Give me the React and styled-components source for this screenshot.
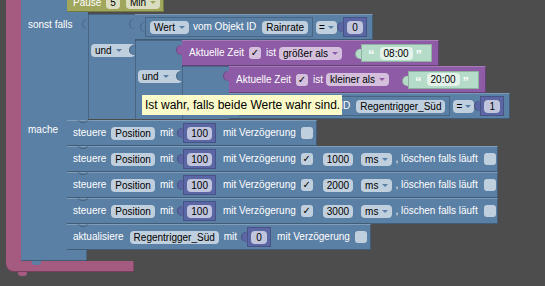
import React from "react";
import styled, { createGlobalStyle, css } from "styled-components";

const C = {
  bg: "#4d4d4d",
  logic: "#5b80a5",
  loop: "#a55b80",
  time: "#8e5ba6",
  math: "#5b67a5",
  text: "#b5dcc8",
  timeout: "#a0a65c",
};

const GlobalStyle = createGlobalStyle`
  html, body {
    margin: 0;
    padding: 0;
    background: ${C.bg};
  }
  body {
    font-family: "Liberation Sans", Arial, sans-serif;
  }
`;

// puzzle tab on the left edge of an output block
const tab = (color, w = 6) => css`
  &::before {
    content: "";
    position: absolute;
    left: -${w}px;
    top: 5px;
    width: ${w}px;
    height: 10px;
    background: ${color};
    border-radius: 5px 0 0 5px;
    box-shadow: inset 1px 0 0 rgba(0, 0, 0, 0.22);
  }
`;

const Workspace = styled.div`
  position: relative;
  width: 545px;
  height: 286px;
  overflow: hidden;
  background: ${C.bg};
  color: #fff;
  font-size: 10px;
  line-height: 12px;
`;

const Placed = styled.div`
  position: absolute;
  left: ${(p) => p.$x}px;
  top: ${(p) => p.$y}px;
`;

const CBlock = styled.div`
  display: flex;
  flex-direction: column;
  align-items: flex-start;
`;

const CBody = styled.div`
  display: flex;
  align-items: stretch;
`;

const Spine = styled.div`
  width: 15px;
  background: ${(p) => p.$c};
`;

const Foot = styled.div`
  position: relative;
  z-index: ${(p) => p.$z ?? 0};
  width: ${(p) => p.$w}px;
  height: 11px;
  background: ${(p) => p.$c};
  border-radius: ${(p) => (p.$round ? "0 0 0 8px" : "0")};
  box-shadow: inset 0 -1px 0 rgba(0, 0, 0, 0.28), inset -1px 0 0 rgba(0, 0, 0, 0.2);

  &::after {
    content: "";
    position: absolute;
    left: ${(p) => p.$tab}px;
    bottom: -4px;
    width: 9px;
    height: 4px;
    background: ${(p) => p.$c};
    border-radius: 0 0 3px 3px;
  }
`;

const IfBlock = styled.div`
  display: flex;
  flex-direction: column;
  align-items: flex-start;
`;

const IfSection = styled.div`
  display: flex;
  align-items: stretch;
`;

const IfCol = styled.div`
  flex-shrink: 0;
  box-sizing: border-box;
  width: ${(p) => p.$w}px;
  padding: ${(p) => p.$pt ?? 0}px 0 0 7px;
  background: ${C.logic};
  white-space: nowrap;
`;

const Slot = styled.div`
  padding: 2px 0 1px;
`;

const Stack = styled.div`
  display: flex;
  flex-direction: column;
  align-items: flex-start;
`;

const Statement = styled.div`
  position: relative;
  display: flex;
  align-items: center;
  flex-shrink: 0;
  box-sizing: border-box;
  height: 26px;
  padding: ${(p) => p.$pt ?? 0}px ${(p) => p.$pr ?? 4}px 0 1px;
  background: ${(p) => p.$c};
  box-shadow: inset 0 1px 0 rgba(255, 255, 255, 0.22),
    inset -1px -1px 0 rgba(0, 0, 0, 0.28);

  &::after {
    content: "";
    position: absolute;
    left: 10px;
    top: 0;
    width: 12px;
    height: 4px;
    background: rgba(0, 0, 0, 0.22);
    clip-path: polygon(0 0, 4px 3px, 8px 3px, 12px 0, 10.5px 0, 7.5px 2px, 4.5px 2px, 1.5px 0);
  }
`;

const VBlock = styled.div`
  position: relative;
  display: flex;
  align-items: center;
  flex-shrink: 0;
  box-sizing: border-box;
  height: ${(p) => p.$h}px;
  margin-left: ${(p) => p.$ml ?? 0}px;
  padding: 0 ${(p) => p.$pr ?? 6}px 0 ${(p) => p.$pl ?? 0}px;
  background: ${(p) => p.$c};
  box-shadow: ${(p) =>
    p.$inner
      ? "inset 0 0 0 1px rgba(0, 0, 0, 0.2)"
      : "inset 0 1px 0 rgba(255, 255, 255, 0.2), inset -1px -1px 0 rgba(0, 0, 0, 0.28)"};
  ${(p) => tab(p.$c, p.$tab ?? 6)}
`;

const AndBox = styled.div`
  position: relative;
  display: flex;
  flex-direction: column;
  align-items: flex-start;
  ${tab(C.logic)}
`;

const AndRow = styled.div`
  display: flex;
  align-items: stretch;
`;

const AndCol = styled.div`
  flex-shrink: 0;
  box-sizing: border-box;
  width: 47px;
  padding: 4px 0 0 3px;
  background: ${C.logic};
  box-shadow: inset 1px 0 0 rgba(0, 0, 0, 0.2)
    ${(p) => (p.$top ? ", inset 0 1px 0 rgba(0, 0, 0, 0.2)" : "")};
`;

const Txt = styled.span`
  flex-shrink: 0;
  margin-left: ${(p) => p.$ml ?? 5}px;
  color: #fff;
  white-space: nowrap;
`;

const Field = styled.span`
  flex-shrink: 0;
  box-sizing: border-box;
  min-width: ${(p) => p.$min ?? 0}px;
  height: 13px;
  margin-left: ${(p) => p.$ml ?? 5}px;
  padding: 0 ${(p) => (p.$tight ? 3 : 4)}px;
  border-radius: 4px;
  background: rgba(255, 255, 255, 0.62);
  color: #000;
  line-height: 13px;
  text-align: center;
  white-space: nowrap;
`;

const Dropdown = styled(Field)`
  display: flex;
  align-items: center;

  &::after {
    content: "";
    margin-left: ${(p) => (p.$tight ? 3 : 4)}px;
    border-left: 3px solid transparent;
    border-right: 3px solid transparent;
    border-top: 3.5px solid ${(p) => p.$arrow};
  }
`;

const Check = styled.span`
  flex-shrink: 0;
  width: 12px;
  height: 12px;
  margin-left: ${(p) => p.$ml ?? 5}px;
  border-radius: 3px;
  background: rgba(255, 255, 255, 0.62);
  color: #000;
  font: bold 10px/12px "DejaVu Sans", sans-serif;
  text-align: center;
`;

const Quote = styled.span`
  margin-left: ${(p) => p.$ml ?? 0}px;
  color: #fff;
  font-size: 13px;
  font-weight: bold;
  line-height: 13px;
  padding-top: 3px;
`;

const Tip = styled.div`
  position: absolute;
  left: 142px;
  top: 95px;
  z-index: 5;
  height: 20px;
  padding: 0 2px 0 3px;
  background: #fbfac9;
  color: #000;
  font-size: 12px;
  line-height: 20px;
  white-space: nowrap;
`;

function NumberBlock({ value, ml }) {
  return (
    <VBlock $c={C.math} $h={20} $ml={ml} $pl={4} $pr={4} $inner>
      <Field $ml={0} $min={16}>
        {value}
      </Field>
    </VBlock>
  );
}

function And({ a, b }) {
  return (
    <AndBox>
      <AndRow>
        <AndCol $top />
        {a}
      </AndRow>
      <AndRow>
        <AndCol>
          <Dropdown $ml={0} $arrow={C.logic}>
            und
          </Dropdown>
        </AndCol>
        {b}
      </AndRow>
    </AndBox>
  );
}

function Compare({ obj, num, h = 26 }) {
  return (
    <VBlock $c={C.logic} $h={h} $pr={6}>
      <VBlock $c={C.logic} $h={20} $ml={10} $pr={5} $tab={5} $inner>
        <Dropdown $arrow={C.logic}>Wert</Dropdown>
        <Txt $ml={4}>vom Objekt ID</Txt>
        <Field $ml={6}>{obj}</Field>
      </VBlock>
      <Dropdown $ml={3} $arrow={C.logic} $tight>
        =
      </Dropdown>
      <NumberBlock value={num} ml={6} />
    </VBlock>
  );
}

function TimeCompare({ op, time, h = 26 }) {
  return (
    <VBlock $c={C.time} $h={h} $pl={2} $pr={7}>
      <Txt>Aktuelle Zeit</Txt>
      <Check>✓</Check>
      <Txt>ist</Txt>
      <Dropdown $ml={3} $arrow={C.time}>
        {op}
      </Dropdown>
      <VBlock $c={C.text} $h={18} $ml={19} $pl={7} $pr={10} $inner>
        <Quote>“</Quote>
        <Field $ml={5}>{time}</Field>
        <Quote $ml={3}>”</Quote>
      </VBlock>
    </VBlock>
  );
}

const delays = ["1000", "2000", "3000"];

export default function App() {
  return (
    <>
      <GlobalStyle />
      <Workspace>
        <Placed $x={6} $y={-14}>
          <CBlock>
            <CBody>
              <Spine $c={C.loop} />
              <IfBlock>
                <IfSection>
                  <IfCol $w={46} />
                  <Stack>
                    <Statement $c={C.timeout} $pr={4} $pt={7}>
                      <Txt>Pause</Txt>
                      <Field>5</Field>
                      <Dropdown $ml={6} $arrow={C.timeout}>
                        Min
                      </Dropdown>
                    </Statement>
                  </Stack>
                </IfSection>

                <IfSection>
                  <IfCol $w={67} $pt={7}>
                    sonst falls
                  </IfCol>
                  <Slot>
                    <And
                      a={<Compare obj="Rainrate" num="0" />}
                      b={
                        <And
                          a={<TimeCompare op="größer als" time="08:00" />}
                          b={
                            <And
                              a={<TimeCompare op="kleiner als" time="20:00" h={27} />}
                              b={<Compare obj="Regentrigger_Süd" num="1" />}
                            />
                          }
                        />
                      }
                    />
                  </Slot>
                </IfSection>

                <IfSection>
                  <IfCol $w={46} $pt={4}>
                    mache
                  </IfCol>
                  <Stack>
                    <Statement $c={C.logic}>
                      <Txt>steuere</Txt>
                      <Field>Position</Field>
                      <Txt>mit</Txt>
                      <NumberBlock value="100" ml={10} />
                      <Txt $ml={7}>mit Verzögerung</Txt>
                      <Check />
                    </Statement>
                    {delays.map((d) => (
                      <Statement key={d} $c={C.logic} $pr={2}>
                        <Txt>steuere</Txt>
                        <Field>Position</Field>
                        <Txt>mit</Txt>
                        <NumberBlock value="100" ml={10} />
                        <Txt $ml={7}>mit Verzögerung</Txt>
                        <Check>✓</Check>
                        <Field $ml={10}>{d}</Field>
                        <Dropdown $ml={8} $arrow={C.logic}>
                          ms
                        </Dropdown>
                        <Txt $ml={3}>, löschen falls läuft</Txt>
                        <Check $ml={6} />
                      </Statement>
                    ))}
                    <Statement $c={C.logic}>
                      <Txt>aktualisiere</Txt>
                      <Field $ml={6}>Regentrigger_Süd</Field>
                      <Txt>mit</Txt>
                      <NumberBlock value="0" ml={10} />
                      <Txt $ml={6}>mit Verzögerung</Txt>
                      <Check />
                    </Statement>
                  </Stack>
                </IfSection>

                <Foot $c={C.logic} $w={66} $tab={11} $z={1} />
              </IfBlock>
            </CBody>
            <Foot $c={C.loop} $w={128} $tab={12} $round />
          </CBlock>
        </Placed>

        <Tip>Ist wahr, falls beide Werte wahr sind.</Tip>
      </Workspace>
    </>
  );
}
